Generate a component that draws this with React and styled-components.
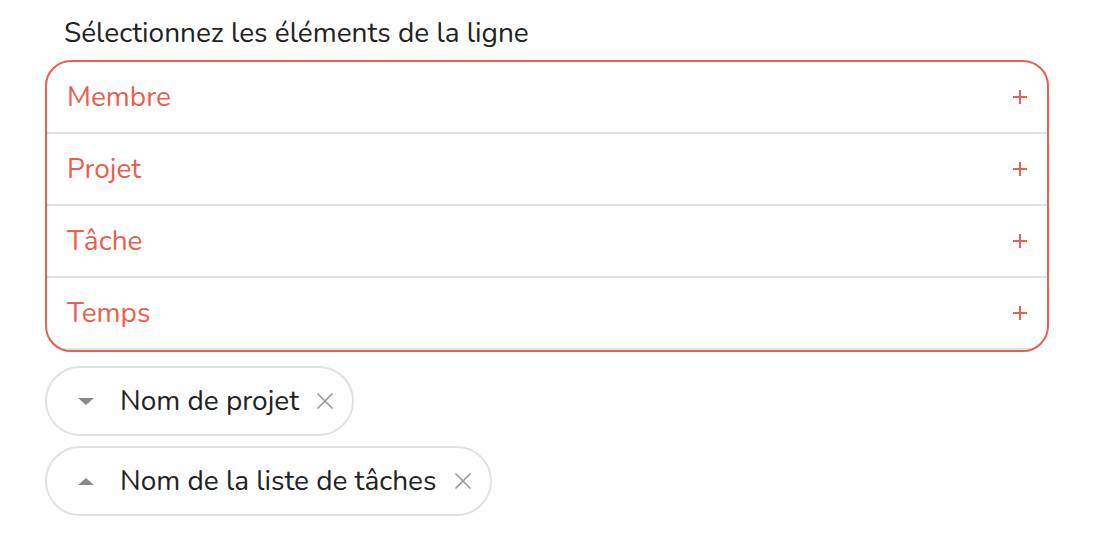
import React from "react";
import styled, { createGlobalStyle } from "styled-components";

const GlobalStyle = createGlobalStyle`
  body {
    margin: 0;
    background: #fff;
    font-family: "Nunito", "Noto Sans", "Open Sans", sans-serif;
  }
`;

const CORAL = "#ea5f4f";

const Page = styled.div`
  padding: 14px 45px 0 45px;
  width: 1004px;
`;

const Title = styled.div`
  font-size: 28px;
  color: #222;
  padding-left: 19px;
  line-height: 38px;
  margin-bottom: 8px;
`;

const ElementBox = styled.div`
  border: 2px solid ${CORAL};
  border-radius: 26px;
  overflow: hidden;
`;

const ElementRow = styled.div`
  display: flex;
  align-items: center;
  justify-content: space-between;
  height: 70px;
  padding: 0 20px 0 20px;
  border-bottom: 2px solid #e2e2e2;
  color: ${CORAL};
  font-size: 28px;
  cursor: pointer;
`;

const Plus = styled.span`
  display: flex;
`;

const ChipList = styled.div`
  display: flex;
  flex-direction: column;
  align-items: flex-start;
  gap: 10px;
  margin-top: 14px;
`;

const Chip = styled.div`
  display: flex;
  align-items: center;
  height: 66px;
  border: 2px solid #e2e2e2;
  border-radius: 36px;
  padding: 0 19px 0 31px;
  font-size: 28px;
  color: #222;
`;

const Caret = styled.span`
  width: 0;
  height: 0;
  border-left: 8px solid transparent;
  border-right: 8px solid transparent;
  ${({ $up }) =>
    $up
      ? "border-bottom: 7px solid #8a8a8a;"
      : "border-top: 7px solid #8a8a8a;"}
  margin-right: 26px;
`;

const Remove = styled.span`
  display: flex;
  margin-left: 18px;
`;

const elements = ["Membre", "Projet", "Tâche", "Temps"];
const chips = [
  { label: "Nom de projet", up: false },
  { label: "Nom de la liste de tâches", up: true },
];

export default function App() {
  return (
    <Page>
      <GlobalStyle />
      <Title>Sélectionnez les éléments de la ligne</Title>
      <ElementBox>
        {elements.map((el) => (
          <ElementRow key={el}>
            {el}
            <Plus>
              <svg width="14" height="14" viewBox="0 0 14 14">
                <path d="M7 0 V14 M0 7 H14" stroke={CORAL} strokeWidth="2" />
              </svg>
            </Plus>
          </ElementRow>
        ))}
      </ElementBox>
      <ChipList>
        {chips.map((c) => (
          <Chip key={c.label}>
            <Caret $up={c.up} />
            {c.label}
            <Remove>
              <svg width="16" height="16" viewBox="0 0 16 16">
                <path
                  d="M1 1 L15 15 M15 1 L1 15"
                  stroke="#9a9a9a"
                  strokeWidth="1.7"
                  strokeLinecap="round"
                />
              </svg>
            </Remove>
          </Chip>
        ))}
      </ChipList>
    </Page>
  );
}
